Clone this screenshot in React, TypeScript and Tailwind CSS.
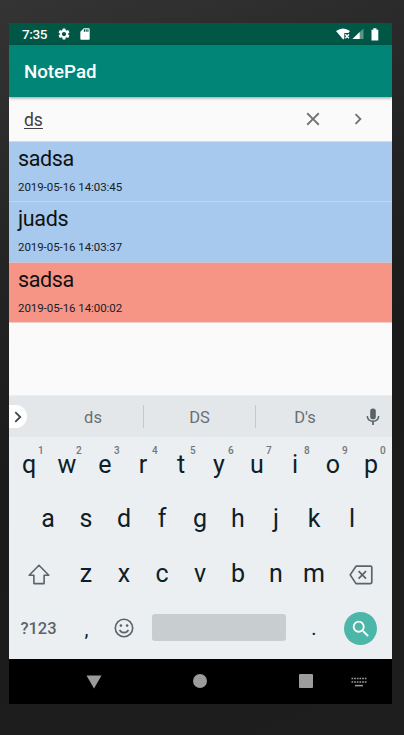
import React from "react";
import { MdSettings, MdSdCard, MdSearch, MdClose, MdChevronRight } from "react-icons/md";

const notes = [
  { title: "sadsa", date: "2019-05-16 14:03:45", color: "bg-[#a6c9ed]", line: "border-[#bdd7f0]", size: "h-[60px]" },
  { title: "juads", date: "2019-05-16 14:03:37", color: "bg-[#a6c9ed]", line: "border-[#cfc5cf]", size: "h-[61px]" },
  { title: "sadsa", date: "2019-05-16 14:00:02", color: "bg-[#f69585]", line: "border-[#f0cdc7]", size: "h-[60px]" },
];

function StatusBar() {
  return (
    <div className="flex h-[22px] items-center bg-[#005746] pl-[13px] pr-[13px] text-white">
      <span className="w-[35px] pt-[1px] text-[13.5px] font-medium leading-[21px] tracking-[-0.4px]">7:35</span>
      <MdSettings className="size-[14px]" />
      <MdSdCard className="ml-[7px] size-[14px]" />
      <div className="ml-auto flex items-center">
        <svg width="15" height="12" viewBox="0 0 15 12">
          <path d="M0 3Q7 -2 14 3L12.4 5H8.3V10.5L7.2 11.5Z" fill="#fff" />
          <path d="M9.3 6.3L13 10.3M13 6.3L9.3 10.3" stroke="#fff" strokeWidth="1.3" />
        </svg>
        <svg width="12" height="12" viewBox="0 0 12 12" className="ml-[1px]">
          <path d="M11.5 0.5V11H0.5Z" fill="#5b9387" />
          <path d="M7.7 4.1V11H0.5Z" fill="#fff" />
        </svg>
        <svg width="8" height="13" viewBox="0 0 8 13" className="ml-[7px]">
          <path d="M2.3 0.3H5.5V1.7H7.3V12.5H0.5V1.7H2.3Z" fill="#fff" />
        </svg>
      </div>
    </div>
  );
}

function Key({ label, hint }: { label: string; hint?: string }) {
  return (
    <div className="relative flex h-full w-[38px] items-center justify-center text-[25px] leading-none text-[#0d2028]">
      {label}
      {hint && (
        <span className="absolute left-[28px] top-[8px] text-[10px] font-medium leading-[12px] text-[#70777b]">
          {hint}
        </span>
      )}
    </div>
  );
}

function Keyboard() {
  return (
    <div className="h-[222px] bg-[#ebeff2]">
      <div className="flex h-[54.5px] pl-[1px]">
        {"qwertyuiop".split("").map((k, i) => (
          <Key key={k} label={k} hint={String((i + 1) % 10)} />
        ))}
      </div>
      <div className="flex h-[54.5px] pl-[20px]">
        {"asdfghjkl".split("").map((k) => (
          <Key key={k} label={k} />
        ))}
      </div>
      <div className="flex h-[54.5px] items-center">
        <div className="flex w-[58px] justify-center pl-[1px] pt-[2px]">
          <svg width="22" height="21" viewBox="0 0 22 21" fill="none" stroke="#5a6469" strokeWidth="1.6" strokeLinejoin="round">
            <path d="M11 1.2L1.2 11.2H5.9V19.6H16.1V11.2H20.8Z" />
          </svg>
        </div>
        {"zxcvbnm".split("").map((k) => (
          <Key key={k} label={k} />
        ))}
        <div className="flex w-[58px] justify-center pr-[2px] pt-[4px]">
          <svg width="24" height="20" viewBox="0 0 24 20" fill="none" stroke="#5a6469" strokeWidth="1.7" strokeLinejoin="round">
            <path d="M7 1.2H21.5Q22.8 1.2 22.8 2.5V17.3Q22.8 18.6 21.5 18.6H7L1.2 9.9Z" />
            <path d="M9.6 6.2L17 13.6M17 6.2L9.6 13.6" />
          </svg>
        </div>
      </div>
      <div className="flex h-[54.5px] items-center">
        <div className="w-[59px] pt-[2px] text-center text-[16.5px] font-medium leading-[20px] text-[#5a6469]">?123</div>
        <div className="w-[37px] pt-[3px] text-center text-[20px] leading-[20px] text-[#0d2028]">,</div>
        <div className="flex w-[38px] justify-center">
          <svg width="20" height="20" viewBox="0 0 20 20" fill="none" stroke="#5a6469" strokeWidth="1.6">
            <circle cx="10" cy="10" r="8.7" />
            <path d="M5.6 11.8Q7 14.6 10 14.6T14.4 11.8" />
            <circle cx="6.9" cy="7.6" r="1.3" fill="#5a6469" stroke="none" />
            <circle cx="13.1" cy="7.6" r="1.3" fill="#5a6469" stroke="none" />
          </svg>
        </div>
        <div className="ml-[9px] h-[27px] w-[134px] rounded-[3px] bg-[#c8cdd0]" />
        <div className="w-[56px] pt-[1px] text-center text-[20px] leading-[20px] text-[#0d2028]">.</div>
        <div className="ml-[2px] mt-[2px] flex size-[33px] items-center justify-center rounded-full bg-[#4cb6a9]">
          <MdSearch className="size-[22px] text-white" />
        </div>
      </div>
    </div>
  );
}

function NavBar() {
  return (
    <div className="flex h-[45px] items-center bg-black text-[#9c9c9c]">
      <svg width="16" height="14" viewBox="0 0 16 14" className="ml-[77px]">
        <path d="M0.5 0.5H15.5L8 13.5Z" fill="currentColor" />
      </svg>
      <div className="mb-[1px] ml-[91px] size-[14px] rounded-full bg-[#9c9c9c]" />
      <div className="mb-[1px] ml-[92px] size-[14px] rounded-[1px] bg-[#9c9c9c]" />
      <svg width="16" height="10" viewBox="0 0 16 10" className="ml-[38px]" fill="none" stroke="currentColor">
        <path d="M0.5 1.5H15.5M0.5 5H15.5" strokeWidth="1.6" strokeDasharray="1.7 0.96" />
        <path d="M4 8.6H12" strokeWidth="1.5" />
      </svg>
    </div>
  );
}

export default function App() {
  return (
    <div className="h-[735px] w-[404px] bg-[linear-gradient(160deg,#343434_0%,#252525_28%,#1b1b1b_55%,#1e1e1e_100%)] pl-[9px] pt-[23px] font-['Roboto',sans-serif]">
      <div className="flex h-[681px] w-[383px] flex-col overflow-hidden bg-[#fafafa]">
        <StatusBar />
        <div className="z-10 flex h-[52px] items-center bg-[#008577] pl-[15px] pt-[3px] text-[18.7px] font-medium text-white shadow-[0_1px_3px_rgba(0,0,0,0.4)]">
          NotePad
        </div>
        <div className="flex h-[44px] items-center pl-[15px] text-[#404040]">
          <span className="pt-[2px] text-[17.5px] underline decoration-1 underline-offset-2">ds</span>
          <MdClose className="ml-auto size-[22px] text-[#707070]" />
          <MdChevronRight className="ml-[23px] mr-[23px] size-[22px] text-[#707070]" />
        </div>
        <div className="h-[254px] border-t border-[#cadced]">
          {notes.map((n) => (
            <div key={n.date} className={`border-b pl-[9px] pt-[2px] ${n.size} ${n.color} ${n.line}`}>
              <div className="text-[21.5px] leading-[29px] tracking-[-0.35px] text-[#111]">{n.title}</div>
              <div className="mt-[6px] text-[11.5px] leading-[16px] tracking-[-0.06px] text-[#182028]">{n.date}</div>
            </div>
          ))}
        </div>
        <div className="flex h-[42px] items-center border-t border-[#eceeef] bg-[#e3e7e9] text-[16.5px] text-[#697073]">
          <div className="flex h-[23px] w-[18px] items-center justify-center rounded-r-full bg-white">
            <svg width="8" height="12" viewBox="0 0 8 12" fill="none" stroke="#424648" strokeWidth="1.8">
              <path d="M1.3 1.2L6.2 6L1.3 10.8" />
            </svg>
          </div>
          <div className="ml-[16px] w-[100px] pt-[3px] text-center">ds</div>
          <div className="h-[23px] w-px bg-[#c5c9cc]" />
          <div className="w-[111px] pt-[3px] text-center">DS</div>
          <div className="h-[23px] w-px bg-[#c5c9cc]" />
          <div className="w-[98px] pt-[3px] text-center">D's</div>
          <svg width="14" height="18" viewBox="0 0 14 18" className="ml-[12px]" fill="none" stroke="#596367">
            <rect x="4.2" y="0.5" width="5.6" height="10.8" rx="2.6" fill="#596367" stroke="none" />
            <path d="M1.3 8Q1.8 13.3 7 13.3T12.7 8" strokeWidth="1.5" />
            <path d="M7 13.3V17" strokeWidth="1.7" />
          </svg>
        </div>
        <Keyboard />
        <NavBar />
      </div>
    </div>
  );
}
